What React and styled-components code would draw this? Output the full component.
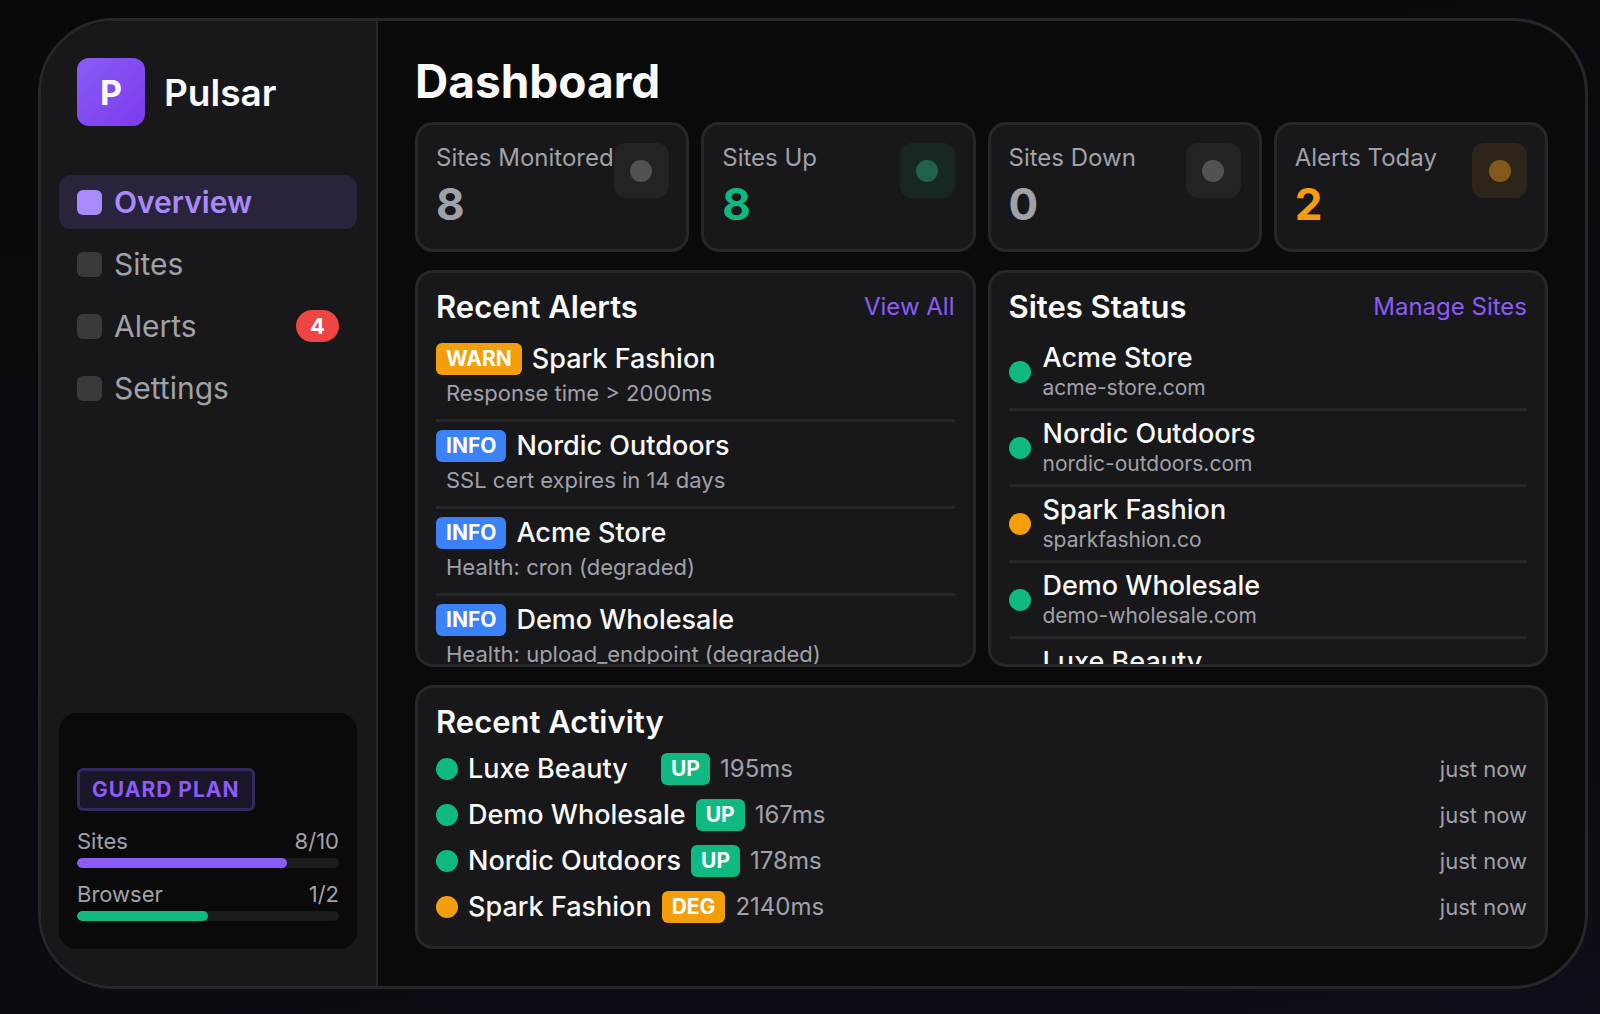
import React from 'react';
import styled, { createGlobalStyle } from 'styled-components';

const GlobalStyle = createGlobalStyle`
  * {
    box-sizing: border-box;
  }
  body {
    margin: 0;
    background: #0a0a0c;
    color: #fafafa;
    font-family: Inter, "Liberation Sans", sans-serif;
  }
  h1, h2, p, ul {
    margin: 0;
    padding: 0;
  }
  ul {
    list-style: none;
  }
`;

const Page = styled.div`
  display: flex;
  height: 100vh;
  padding: 18px 12px 25px 38px;
  background: linear-gradient(170deg, #09090b 0%, #0b0a10 40%, #0c0b12 80%, #100e18 100%);
`;

const Window = styled.div`
  display: flex;
  flex: 1;
  min-width: 0;
  overflow: hidden;
  border: 3px solid #27272a;
  border-radius: 76px;
  background: #0a0a0a;
`;

const Sidebar = styled.aside`
  display: flex;
  flex-direction: column;
  flex: none;
  width: 337px;
  padding: 37px 19px 37px 18px;
  border-right: 2px solid #27272a;
  background: #18181a;
`;

const Brand = styled.div`
  display: flex;
  align-items: center;
  gap: 19px;
  padding: 0 18px;
  margin-bottom: 49px;
  font-size: 37px;
  font-weight: 600;
`;

const Logo = styled.span`
  display: flex;
  align-items: center;
  justify-content: center;
  width: 68px;
  height: 68px;
  border-radius: 12px;
  background: linear-gradient(135deg, #8b5cf6, #7c3aed);
  font-size: 34px;
  font-weight: 700;
`;

const Nav = styled.nav`
  display: flex;
  flex-direction: column;
  gap: 8px;
`;

const NavItem = styled.a`
  display: flex;
  align-items: center;
  gap: 12px;
  height: 54px;
  padding: 0 18px;
  border-radius: 12px;
  background: ${(props) => (props.$active ? '#2a233c' : 'transparent')};
  color: ${(props) => (props.$active ? '#a78bfa' : '#a1a1aa')};
  font-size: 30px;
  font-weight: ${(props) => (props.$active ? 600 : 400)};
  text-decoration: none;
`;

const NavIcon = styled.span`
  width: 25px;
  height: 25px;
  border-radius: 6px;
  background: ${(props) => (props.$active ? '#a78bfa' : '#3a3a3d')};
`;

const NavCount = styled.span`
  margin-left: auto;
  padding: 0 14px;
  border-radius: 16px;
  background: #ef4444;
  color: #fff;
  font-size: 22px;
  font-weight: 700;
  line-height: 32px;
`;

const PlanCard = styled.section`
  margin-top: auto;
  padding: 55px 18px 28px;
  border-radius: 18px;
  background: #0a0a0a;
`;

const PlanTag = styled.span`
  display: inline-block;
  padding: 0 12px;
  margin-bottom: 16px;
  border: 3px solid #35275f;
  border-radius: 6px;
  background: #1b1529;
  color: #8b5cf6;
  font-size: 21px;
  font-weight: 700;
  letter-spacing: 1px;
  line-height: 37px;
`;

const Usage = styled.div`
  & + & {
    margin-top: 12px;
  }
`;

const UsageLabel = styled.div`
  display: flex;
  justify-content: space-between;
  margin-bottom: 3px;
  color: #a1a1aa;
  font-size: 22px;
  line-height: 28px;
`;

const Track = styled.div`
  height: 10px;
  overflow: hidden;
  border-radius: 5px;
  background: #1c1c1e;
`;

const Fill = styled.div`
  height: 100%;
  border-radius: 5px;
  background: ${(props) => props.$color};
`;

const Main = styled.main`
  display: grid;
  flex: 1;
  grid-template-rows: auto auto minmax(0, 1fr) auto;
  gap: 18px;
  min-width: 0;
  padding: 37px;
`;

const Title = styled.h1`
  font-size: 46px;
  font-weight: 700;
  line-height: 46px;
`;

const StatGrid = styled.div`
  display: grid;
  grid-template-columns: repeat(4, minmax(0, 1fr));
  gap: 12px;
`;

const PanelGrid = styled.div`
  display: grid;
  grid-template-columns: repeat(2, minmax(0, 1fr));
  gap: 12px;
  min-height: 0;
`;

const Card = styled.section`
  min-width: 0;
  min-height: 0;
  overflow: hidden;
  padding: 18px;
  border: 3px solid #27272a;
  border-radius: 18px;
  background: #18181b;
`;

const StatCard = styled(Card)`
  display: flex;
  justify-content: space-between;
`;

const StatLabel = styled.p`
  color: #a1a1aa;
  font-size: 24px;
  line-height: 30px;
  white-space: nowrap;
`;

const StatValue = styled.p`
  margin-top: 4px;
  color: ${(props) => props.$color};
  font-size: 44px;
  font-weight: 700;
  line-height: 54px;
`;

const StatIcon = styled.span`
  display: flex;
  align-items: center;
  justify-content: center;
  flex: none;
  width: 55px;
  height: 55px;
  border-radius: 12px;
  background: ${(props) => props.$color};
`;

const Dot = styled.span`
  flex: none;
  width: 22px;
  height: 22px;
  border-radius: 50%;
  background: ${(props) => props.$color};
`;

const CardHeader = styled.header`
  display: flex;
  align-items: center;
  justify-content: space-between;
  margin-bottom: 12px;
`;

const CardTitle = styled.h2`
  font-size: 31px;
  font-weight: 600;
  line-height: 32px;
`;

const CardLink = styled.a`
  color: #8b5cf6;
  font-size: 24px;
  line-height: 28px;
  text-decoration: none;
`;

const AlertItem = styled.li`
  padding: 8px 0 12px;
  border-bottom: 3px solid #27272a;
`;

const AlertTop = styled.div`
  display: flex;
  align-items: center;
  gap: 10px;
`;

const Tag = styled.span`
  padding: 0 10px;
  border-radius: 6px;
  background: ${(props) => props.$color};
  color: #fff;
  font-size: 21px;
  font-weight: 700;
  line-height: 32px;
`;

const Name = styled.span`
  font-size: 27px;
  font-weight: 500;
  line-height: 32px;
`;

const AlertText = styled.p`
  margin-top: 4px;
  padding-left: 10px;
  color: #a1a1aa;
  font-size: 22px;
  line-height: 28px;
`;

const SiteItem = styled.li`
  display: flex;
  align-items: center;
  gap: 12px;
  padding: 7px 0;
  border-bottom: 3px solid #27272a;
`;

const SiteInfo = styled.div`
  display: flex;
  flex-direction: column;
`;

const Domain = styled.span`
  min-height: 27px;
  color: #a1a1aa;
  font-size: 21px;
  line-height: 27px;
`;

const ActivityList = styled.ul`
  display: flex;
  flex-direction: column;
  gap: 14px;
  padding: 3px 0 5px;
`;

const ActivityItem = styled.li`
  display: flex;
  align-items: center;
  gap: 10px;
`;

const ActivityName = styled(Name)`
  min-width: 183px;
`;

const Muted = styled.span`
  color: #a1a1aa;
  font-size: 24px;
  line-height: 28px;
`;

const Time = styled(Muted)`
  margin-left: auto;
  font-size: 22px;
`;

const GREEN = '#10b981';
const AMBER = '#f59e0b';
const BLUE = '#3b82f6';
const PURPLE = '#8b5cf6';

const navItems = [
  { label: 'Overview', active: true },
  { label: 'Sites' },
  { label: 'Alerts', count: 4 },
  { label: 'Settings' },
];

const usage = [
  { label: 'Sites', used: 8, total: 10, color: PURPLE },
  { label: 'Browser', used: 1, total: 2, color: GREEN },
];

const stats = [
  { label: 'Sites Monitored', value: 8, color: '#a1a1aa', box: '#232327', dot: '#515256' },
  { label: 'Sites Up', value: 8, color: GREEN, box: '#192723', dot: '#1f6149' },
  { label: 'Sites Down', value: 0, color: '#a1a1aa', box: '#232327', dot: '#515256' },
  { label: 'Alerts Today', value: 2, color: AMBER, box: '#2d241a', dot: '#835a1c' },
];

const alerts = [
  { level: 'WARN', color: AMBER, site: 'Spark Fashion', text: 'Response time > 2000ms' },
  { level: 'INFO', color: BLUE, site: 'Nordic Outdoors', text: 'SSL cert expires in 14 days' },
  { level: 'INFO', color: BLUE, site: 'Acme Store', text: 'Health: cron (degraded)' },
  { level: 'INFO', color: BLUE, site: 'Demo Wholesale', text: 'Health: upload_endpoint (degraded)' },
];

const sites = [
  { name: 'Acme Store', domain: 'acme-store.com', color: GREEN },
  { name: 'Nordic Outdoors', domain: 'nordic-outdoors.com', color: GREEN },
  { name: 'Spark Fashion', domain: 'sparkfashion.co', color: AMBER },
  { name: 'Demo Wholesale', domain: 'demo-wholesale.com', color: GREEN },
  { name: 'Luxe Beauty', domain: '', color: GREEN },
];

const activity = [
  { name: 'Luxe Beauty', status: 'UP', ms: 195, color: GREEN },
  { name: 'Demo Wholesale', status: 'UP', ms: 167, color: GREEN },
  { name: 'Nordic Outdoors', status: 'UP', ms: 178, color: GREEN },
  { name: 'Spark Fashion', status: 'DEG', ms: 2140, color: AMBER },
];

function App() {
  return (
    <>
      <GlobalStyle />
      <Page>
        <Window>
          <Sidebar>
            <Brand><Logo>P</Logo>Pulsar</Brand>
            <Nav>
              {navItems.map((item) => (
                <NavItem key={item.label} href="#" $active={item.active}>
                  <NavIcon $active={item.active} />
                  {item.label}
                  {item.count && <NavCount>{item.count}</NavCount>}
                </NavItem>
              ))}
            </Nav>
            <PlanCard>
              <PlanTag>GUARD PLAN</PlanTag>
              {usage.map((item) => (
                <Usage key={item.label}>
                  <UsageLabel>
                    <span>{item.label}</span>
                    <span>{item.used}/{item.total}</span>
                  </UsageLabel>
                  <Track>
                    <Fill $color={item.color} style={{ width: `${(item.used / item.total) * 100}%` }} />
                  </Track>
                </Usage>
              ))}
            </PlanCard>
          </Sidebar>
          <Main>
            <Title>Dashboard</Title>
            <StatGrid>
              {stats.map((stat) => (
                <StatCard key={stat.label}>
                  <div>
                    <StatLabel>{stat.label}</StatLabel>
                    <StatValue $color={stat.color}>{stat.value}</StatValue>
                  </div>
                  <StatIcon $color={stat.box}><Dot $color={stat.dot} /></StatIcon>
                </StatCard>
              ))}
            </StatGrid>
            <PanelGrid>
              <Card>
                <CardHeader>
                  <CardTitle>Recent Alerts</CardTitle>
                  <CardLink href="#">View All</CardLink>
                </CardHeader>
                <ul>
                  {alerts.map((alert) => (
                    <AlertItem key={alert.site}>
                      <AlertTop>
                        <Tag $color={alert.color}>{alert.level}</Tag>
                        <Name>{alert.site}</Name>
                      </AlertTop>
                      <AlertText>{alert.text}</AlertText>
                    </AlertItem>
                  ))}
                </ul>
              </Card>
              <Card>
                <CardHeader>
                  <CardTitle>Sites Status</CardTitle>
                  <CardLink href="#">Manage Sites</CardLink>
                </CardHeader>
                <ul>
                  {sites.map((site) => (
                    <SiteItem key={site.name}>
                      <Dot $color={site.color} />
                      <SiteInfo>
                        <Name>{site.name}</Name>
                        <Domain>{site.domain}</Domain>
                      </SiteInfo>
                    </SiteItem>
                  ))}
                </ul>
              </Card>
            </PanelGrid>
            <Card>
              <CardHeader>
                <CardTitle>Recent Activity</CardTitle>
              </CardHeader>
              <ActivityList>
                {activity.map((item) => (
                  <ActivityItem key={item.name}>
                    <Dot $color={item.color} />
                    <ActivityName>{item.name}</ActivityName>
                    <Tag $color={item.color}>{item.status}</Tag>
                    <Muted>{item.ms}ms</Muted>
                    <Time>just now</Time>
                  </ActivityItem>
                ))}
              </ActivityList>
            </Card>
          </Main>
        </Window>
      </Page>
    </>
  );
}

export default App;
